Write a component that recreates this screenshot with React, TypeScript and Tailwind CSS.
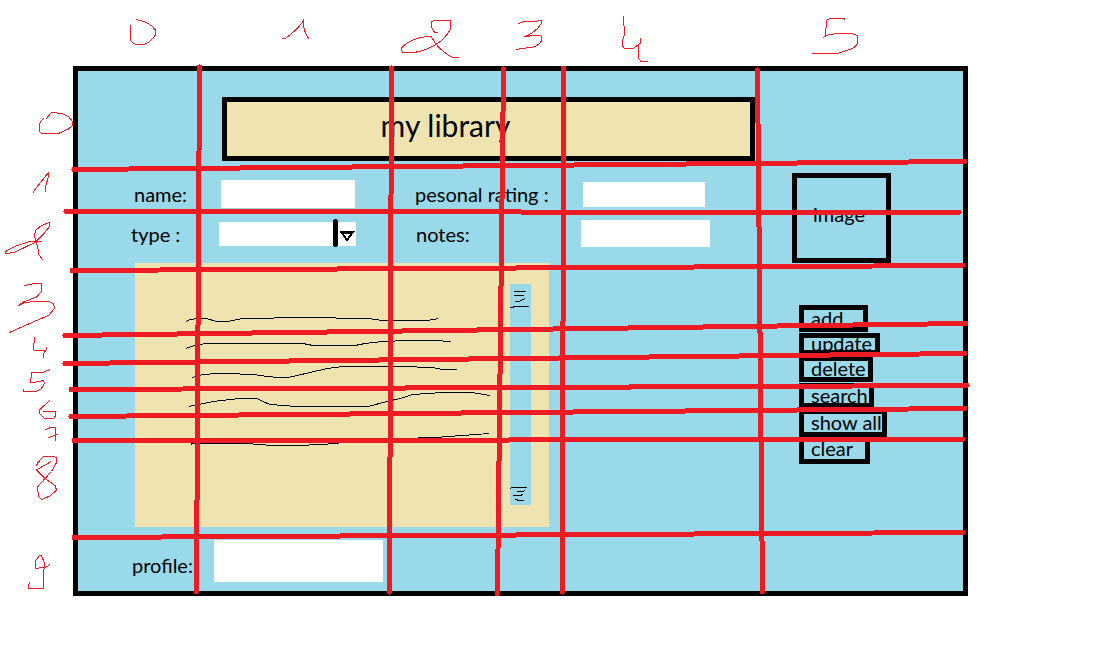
import React from "react";

const gridLines = [
  "M199.5 67L196.5 592",
  "M391.5 68L389.5 592",
  "M503.5 69L497.5 594",
  "M563.5 68L562.5 592",
  "M757.5 70L762.5 592",
  "M74 169.5L965 161.5",
  "M66 211.5L959 212.5",
  "M72 270.5L963 265.5",
  "M65 335.5L966 323.5",
  "M65 363.5L965 353.5",
  "M71 389.5L967 385.5",
  "M71 416.5L965 408.5",
  "M74 440.5L963 439.5",
  "M74 537.5L963 532.5",
];

const columnNumbers = [
  "M130.5 25V39Q131 44 138 44.5H144Q151 42 155.5 35V30Q150 22 136 19.5",
  "M282 38.5H285Q295 32 303.5 21V19V25Q305 35 309 38.5",
  "M438 32.5H435Q431 30 431.5 22L434 20.5H450.5V29Q446 38 436 44.5Q425 51 414 52.5H403Q401 51 401.5 48C406 42 420 36 431 36.5Q433 39 435 43Q443 53 453 57.5H459",
  "M518 23.5L523 22L535 21.5L541 20.5V24Q536 32 524.5 37L533 35.5H541L541.5 41Q538 46 533 47L522 48.5L516 49.5",
  "M623.5 17L624.5 35L622.5 40V46L624.5 48.5H633L640 43.5V38M638.5 46L639 59L641 61.5H648",
  "M844 19.5V18.5H830L826.5 20.5L825.5 36L823.5 37.5M825.5 35.5L837 33.5H852L857.5 35.5V43.5Q855 48 850 49.5L837 53.5H812",
];

const rowNumbers = [
  "M46.5 118.5L51.5 112.5L61.5 113.5L68.5 116.5L72.5 121.5V125.5L68.5 129L58.5 133.5H41.5L39.5 131.5V124.5Q40 121 44 118.5",
  "M33.5 192.5L34.5 190L48.5 172.5V176L45.5 187V191.5",
  "M41.5 241.5H30L17 245.5L5.5 251.5V253.5H8L15 252L35 242.5L43.5 234L49.5 226.5V222.5L41.5 225.5L35.5 230.5L34.5 236L37.5 246.5L39 255L42.5 259.5",
  "M24.5 285.5L29.5 284.5L35 283.5H41.5V291.5L36.5 297L23.5 302L18.5 305.5L25 302.5L35 301.5H48.5L53.5 303.5L54.5 308.5L48.5 315.5L36.5 320.5L9.5 332.5",
  "M34.5 337.5L33.5 349.5L35 350.5H46L46.5 347.5M46 350.5L43.5 353.5V357.5",
  "M50 369.5L42.5 372.5L31.5 373L30.5 383L43.5 380.5L44.5 383.5L41.5 388.5L36.5 391.5H23.5V389",
  "M49.5 400.5L40 409.5L39.5 413.5L44.5 418.5H53.5L55.5 416V411.5H43.5",
  "M45.5 429.5L49.5 428L55.5 427.5V440.5M48.5 437.5L57.5 434.5",
  "M51 461.5L36.5 470L45 478.5L55 485.5L56.5 490L50 496L41.5 499.5L38.5 496.5L37.5 487L45 478.5L51.5 471.5L56.5 462.5V458L54 456.5H43.5L37.5 463L36.5 466",
  "M50 564.5L46.5 567L36 568.5L35.5 561L39.5 555.5H41.5L44.5 563.5L43.5 575V588.5H28.5V585L30 582.5",
];

const entries = [
  "M186 321.5L190 319.5L198 318.5H206L217 321.5H228L242 318.5H268L280 317.5H330L342 318.5H368L383 320.5H427L438.5 318.5",
  "M186 348.5L193 346L206 343.5H303L313 345.5H355L365 343.5L382 341.5L408 340.5H435L451 341.5",
  "M192 377.5L203 374.5L217 373.5H226L253 374.5L268 376.5L277 377.5H288L308 373L327 368.5L343 366.5H400L433 367.5L442 369.5H457",
  "M189 406.5L213 401.5L240 398.5H257L262 401L270 404.5L297 406.5H368L387 401.5L400 398.5L413 394.5L443 392.5H472L490.5 395.5",
  "M191.5 444.5V443.5H246L273 445.5H302L317 444.5L339 443.5",
  "M418 437.5H436L462 435.5L489.5 433.5",
];

const scrollMarks = [
  "M514 291.5H526M514 295.5H524M515 301.5H519L525 298.5M510 307.5H513V306.5H529",
  "M510 488.5L512 487.5H527M517 491.5H523L525 490.5M513 495.5H520L523 494.5M515 499.5H517L518 500.5H524",
];

function Strokes({ paths }: { paths: string[] }) {
  return (
    <>
      {paths.map((d) => (
        <path key={d} d={d} />
      ))}
    </>
  );
}

function Annotations() {
  return (
    <svg
      aria-hidden="true"
      className="pointer-events-none absolute inset-0 h-full w-full"
      viewBox="0 0 1107 660"
      preserveAspectRatio="none"
      fill="none"
      stroke="#ed1c24"
      strokeLinecap="round"
      shapeRendering="crispEdges"
    >
      <g strokeWidth="5">
        <Strokes paths={gridLines} />
      </g>
      <g strokeWidth="1">
        <Strokes paths={columnNumbers} />
        <Strokes paths={rowNumbers} />
      </g>
    </svg>
  );
}

const field = "block w-full min-w-0 bg-white px-1 text-base outline-none";
const action = "flex items-center border-5 border-black pb-0.5 pl-[7px] leading-none whitespace-nowrap";

export default function App() {
  return (
    <div className="relative min-h-screen bg-white pt-[66px] pr-[139px] pb-16 pl-[73px] font-['Lato',sans-serif] text-[20px] leading-6 text-black">
      <main className="grid grid-cols-[714fr_171fr] border-5 border-black bg-[#99d9ea]">
        <div className="pt-[26px] pb-[9px]">
          <header className="grid grid-cols-[144fr_533fr_37fr]">
            <h1 className="col-start-2 flex h-16 items-center justify-center border-5 border-black bg-[#efe4b0] pr-[86px] pb-2 text-[30px]">
              my library
            </h1>
          </header>

          <div className="mt-[19px] grid h-7 grid-cols-[87px_134fr_60fr_168fr_122fr_87fr] items-center pl-14">
            <label htmlFor="name">name:</label>
            <input id="name" className={`${field} h-7`} />
            <label htmlFor="rating" className="col-start-4 whitespace-nowrap">
              pesonal rating :
            </label>
            <input id="rating" className={`${field} h-[25px]`} />
          </div>

          <div className="mt-3 grid h-[27px] grid-cols-[88px_137fr_60fr_165fr_129fr_82fr] items-center pl-[53px]">
            <label htmlFor="type">type :</label>
            <div className="relative">
              <select id="type" className={`${field} h-6 appearance-none`} />
              <svg
                aria-hidden="true"
                className="pointer-events-none absolute -top-1 right-0 h-8 w-6"
                viewBox="332 218 24 32"
                fill="none"
                stroke="#000"
                strokeLinecap="round"
                shapeRendering="crispEdges"
              >
                <path d="M335.5 221.5V244.5" strokeWidth="5" />
                <path d="M341 232H353L347 240L342 233M344 233H351" strokeWidth="2" />
              </svg>
            </div>
            <label htmlFor="notes" className="col-start-4">
              notes:
            </label>
            <input id="notes" className={`${field} h-[27px]`} />
          </div>

          <div className="mt-4 grid grid-cols-[57fr_414fr_243fr]">
            <section
              aria-label="library entries"
              className="relative col-start-2 flex h-[264px] justify-end bg-[#efe4b0] pt-[21px] pr-[18px] pb-[22px]"
            >
              <div className="w-[21px] bg-[#99d9ea]" />
              <svg
                aria-hidden="true"
                className="absolute inset-0 h-full w-full"
                viewBox="135 263 414 264"
                preserveAspectRatio="none"
                fill="none"
                stroke="#000"
                strokeWidth="1"
                shapeRendering="crispEdges"
              >
                <Strokes paths={entries} />
                <Strokes paths={scrollMarks} />
              </svg>
            </section>
          </div>

          <div className="mt-[13px] grid grid-cols-[82px_169fr_409fr] items-center pl-[54px]">
            <label htmlFor="profile" className="pt-2">
              profile:
            </label>
            <input id="profile" className={`${field} h-[42px]`} />
          </div>
        </div>

        <aside className="pt-[102px]">
          <div className="flex h-[90px] w-[99px] items-center border-5 border-black pb-2 pl-4">image</div>
          <div className="mt-[42px] ml-[7px] flex flex-col items-start gap-px">
            <button type="button" className={`${action} h-[27px] w-[69px]`}>add</button>
            <button type="button" className={`${action} h-[22px] w-[81px]`}>update</button>
            <button type="button" className={`${action} h-[26px] w-[74px]`}>delete</button>
            <button type="button" className={`${action} h-[25px] w-[75px]`}>search</button>
            <button type="button" className={`${action} h-7 w-[88px]`}>show all</button>
            <button type="button" className={`${action} -mt-1 h-[30px] w-[71px]`}>clear</button>
          </div>
        </aside>
      </main>
      <Annotations />
    </div>
  );
}
